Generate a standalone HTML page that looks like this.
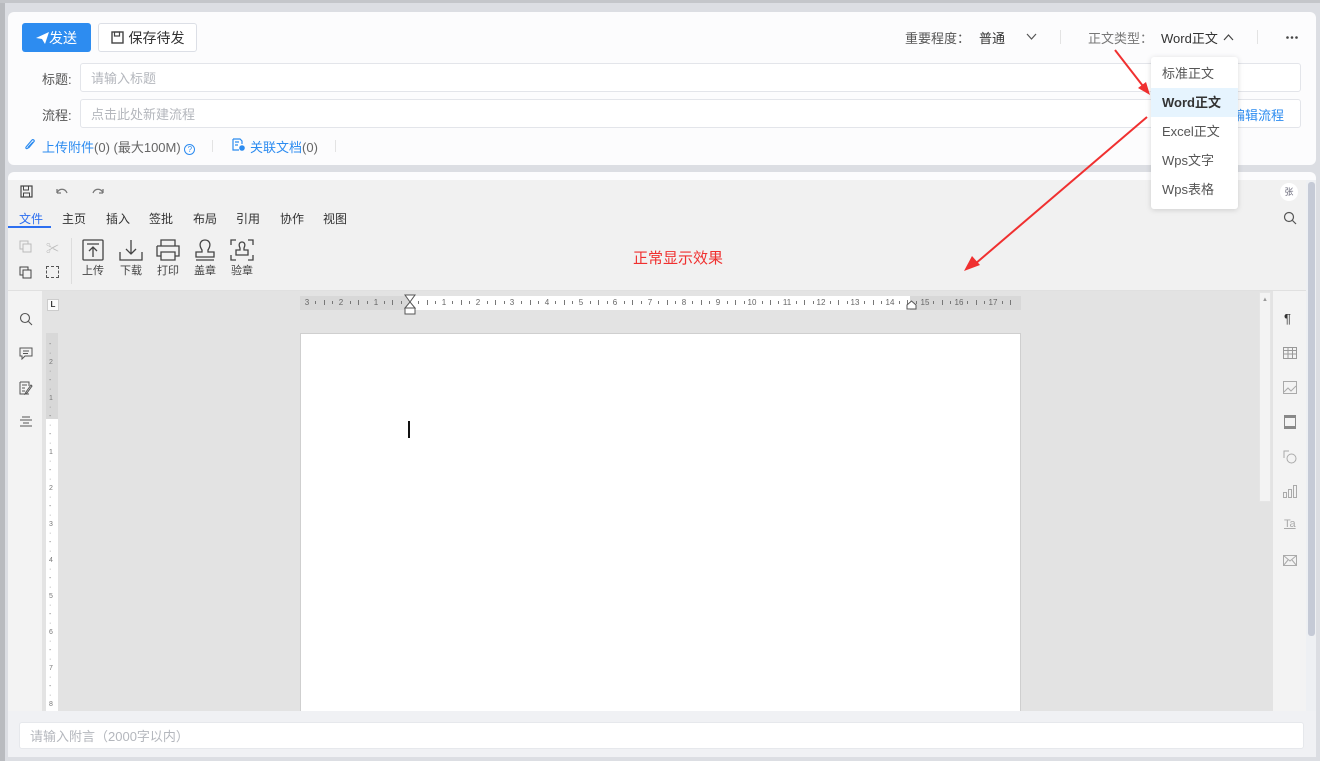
<!DOCTYPE html>
<html><head><meta charset="utf-8"><style>
*{box-sizing:border-box;margin:0;padding:0}
body{width:1320px;height:761px;background:#dcdee3;font-family:"Liberation Sans","Noto Sans CJK SC",sans-serif;font-size:13px;color:#333;position:relative;overflow:hidden}
.abs{position:absolute}
.card{position:absolute;background:#fcfcfd;border-radius:6px}
.btn{position:absolute;border-radius:3px;font-size:14px;display:flex;align-items:center;justify-content:center}
.inp{position:absolute;background:#fff;border:1px solid #e3e5ea;border-radius:3px;color:#b4b7bd;font-size:13px;padding-left:10px;display:flex;align-items:center}
.lbl{position:absolute;font-size:13px;color:#555}
.tab{position:absolute;top:210px;font-size:12px;color:#333}
.tb{position:absolute;font-size:11px;color:#444;text-align:center;width:30px}
.r{position:absolute;top:298px;font-size:8px;color:#666;width:12px;margin-left:-6px;text-align:center;line-height:9px}
.t{position:absolute;top:301px;width:1px;height:3px;background:#777}
.T{position:absolute;top:300px;width:1px;height:5px;background:#777}
.dd div{height:29px;line-height:29px;padding-left:11px;font-size:13px;color:#555}
</style></head><body>
<div class="abs" style="left:0;top:0;width:5px;height:761px;background:#b9bbbf"></div>
<div class="abs" style="left:0;top:0;width:1320px;height:3px;background:#c4c6ca"></div>
<div class="card" style="left:8px;top:12px;width:1308px;height:153px"></div>
<div class="btn" style="left:22px;top:23px;width:69px;height:29px;background:#2d8cf0;color:#fff"><svg width="13" height="12" viewBox="0 0 13 12"><path d="M0 6 L13 0 L9 12 L6 7 Z" fill="#fff"/></svg>发送</div>
<div class="btn" style="left:98px;top:23px;width:99px;height:29px;border:1px solid #dcdfe6;background:#fff;color:#333"><svg width="13" height="13" viewBox="0 0 13 13" style="margin-right:5px"><rect x="1" y="1" width="11" height="11" fill="none" stroke="#444" stroke-width="1.4"/><rect x="3.5" y="1" width="5" height="4" fill="none" stroke="#444" stroke-width="1.2"/></svg>保存待发</div>
<div class="lbl" style="left:905px;top:28px;color:#555">重要程度：</div>
<div class="lbl" style="left:979px;top:28px;color:#333">普通</div>
<svg class="abs" style="left:1026px;top:33px" width="11" height="8"><path d="M1 1 L5.5 6 L10 1" fill="none" stroke="#555" stroke-width="1.2"/></svg>
<div class="abs" style="left:1060px;top:30px;width:1px;height:14px;background:#e3e3e3"></div>
<div class="lbl" style="left:1088px;top:28px;color:#777">正文类型：</div>
<div class="lbl" style="left:1161px;top:28px;color:#333">Word正文</div>
<svg class="abs" style="left:1223px;top:33px" width="11" height="8"><path d="M1 7 L5.5 2 L10 7" fill="none" stroke="#444" stroke-width="1.2"/></svg>
<div class="abs" style="left:1257px;top:30px;width:1px;height:14px;background:#e3e3e3"></div>
<svg class="abs" style="left:1286px;top:36px" width="12" height="3"><circle cx="1.5" cy="1.5" r="1.3" fill="#444"/><circle cx="6" cy="1.5" r="1.3" fill="#444"/><circle cx="10.5" cy="1.5" r="1.3" fill="#444"/></svg>
<div class="lbl" style="left:42px;top:69px">标题:</div>
<div class="inp" style="left:80px;top:63px;width:1221px;height:29px">请输入标题</div>
<div class="lbl" style="left:42px;top:105px">流程:</div>
<div class="inp" style="left:80px;top:99px;width:1221px;height:29px">点击此处新建流程</div>
<div class="abs" style="left:1232px;top:105px;font-size:13px;color:#2d8cf0">编辑流程</div>
<svg class="abs" style="left:24px;top:138px" width="12" height="13"><path d="M9 4L4 10C2.5 11.5 1 10 2.5 8.5L8 2C9 1 11 2.5 10 3.5L5 9.5C4.5 10 3.8 9.5 4.3 9L8 5" fill="none" stroke="#2d8cf0" stroke-width="1.2"/></svg>
<div class="abs" style="left:42px;top:137px;font-size:13px;color:#2d8cf0">上传附件<span style="color:#666">(0) (最大100M)</span> <span style="display:inline-block;width:11px;height:11px;border:1px solid #2d8cf0;border-radius:50%;font-size:8px;text-align:center;line-height:10px">?</span></div>
<div class="abs" style="left:212px;top:140px;width:1px;height:12px;background:#e3e3e3"></div>
<svg class="abs" style="left:232px;top:138px" width="13" height="13"><path d="M1 1H8L10 3V6M1 1V12H7M3 4H7M3 7H6" fill="none" stroke="#2d8cf0" stroke-width="1.2"/><circle cx="10" cy="10" r="2.8" fill="#2d8cf0"/></svg>
<div class="abs" style="left:250px;top:137px;font-size:13px;color:#2d8cf0">关联文档<span style="color:#666">(0)</span></div>
<div class="abs" style="left:335px;top:140px;width:1px;height:12px;background:#e3e3e3"></div>
<div class="card" style="left:8px;top:172px;width:1308px;height:585px;background:#fcfcfd"></div>
<div class="abs" style="left:8px;top:180px;width:1298px;height:110px;background:#f1f1f1"></div>
<div class="abs" style="left:8px;top:290px;width:1298px;height:1px;background:#e0e0e0"></div>
<svg class="abs" style="left:20px;top:185px" width="13" height="13"><rect x="1" y="1" width="11" height="11" fill="none" stroke="#444" stroke-width="1.2"/><rect x="3.5" y="1" width="5" height="4" fill="none" stroke="#444"/><rect x="3.5" y="8" width="6" height="4" fill="none" stroke="#444"/></svg>
<svg class="abs" style="left:55px;top:187px" width="14" height="8"><path d="M2 6C4 1 10 1 12 6M2 6V2M2 6H6" fill="none" stroke="#777" stroke-width="1.3"/></svg>
<svg class="abs" style="left:91px;top:187px" width="14" height="8"><path d="M12 6C10 1 4 1 2 6M12 6V2M12 6H8" fill="none" stroke="#777" stroke-width="1.3"/></svg>
<div class="tab" style="left:19px;color:#2d6ff0">文件</div>
<div class="abs" style="left:8px;top:226px;width:43px;height:2px;background:#2d6ff0"></div>
<div class="tab" style="left:62px">主页</div>
<div class="tab" style="left:106px">插入</div>
<div class="tab" style="left:149px">签批</div>
<div class="tab" style="left:193px">布局</div>
<div class="tab" style="left:236px">引用</div>
<div class="tab" style="left:280px">协作</div>
<div class="tab" style="left:323px">视图</div>
<svg class="abs" style="left:19px;top:240px" width="13" height="13"><rect x="1" y="1" width="8" height="8" fill="none" stroke="#bbb"/><rect x="4" y="4" width="8" height="8" fill="#f1f1f1" stroke="#bbb"/></svg>
<div class="abs" style="left:46px;top:238px;color:#bbb;font-size:13px">✂</div>
<svg class="abs" style="left:19px;top:266px" width="13" height="13"><rect x="1" y="1" width="8" height="8" fill="none" stroke="#444"/><rect x="4" y="4" width="8" height="8" fill="#f1f1f1" stroke="#444"/></svg>
<div class="abs" style="left:46px;top:266px;width:13px;height:12px;border:1px dashed #555"></div>
<div class="abs" style="left:71px;top:238px;width:1px;height:46px;background:#ddd"></div>
<svg class="abs" style="left:82px;top:239px" width="22" height="22"><rect x="1" y="1" width="20" height="20" rx="1" fill="none" stroke="#444" stroke-width="1.3"/><path d="M5 5H17M11 8V18M7 12L11 8L15 12" fill="none" stroke="#444" stroke-width="1.3"/></svg>
<svg class="abs" style="left:119px;top:239px" width="24" height="22"><path d="M12 1V15M7 10L12 15L17 10M1 13V21H23V13" fill="none" stroke="#444" stroke-width="1.3"/></svg>
<svg class="abs" style="left:156px;top:239px" width="24" height="22"><path d="M5 7V1H19V7M1 7H23V17H19M5 17H1V7M5 13H19V21H5Z" fill="none" stroke="#444" stroke-width="1.3"/></svg>
<svg class="abs" style="left:194px;top:239px" width="22" height="22"><path d="M8 11C4 5 7 1 11 1S18 5 14 11V13H20V18H2V13H8Z M2 21H20" fill="none" stroke="#444" stroke-width="1.3"/></svg>
<svg class="abs" style="left:230px;top:239px" width="24" height="22"><path d="M1 6V1H6M18 1H23V6M1 16V21H6M18 21H23V16M10 9C8 5 10 3 12 3S16 5 14 9V11H18V16H6V11H10Z" fill="none" stroke="#444" stroke-width="1.3"/></svg>
<div class="tb" style="left:78px;top:262px">上传</div>
<div class="tb" style="left:116px;top:262px">下载</div>
<div class="tb" style="left:153px;top:262px">打印</div>
<div class="tb" style="left:190px;top:262px">盖章</div>
<div class="tb" style="left:227px;top:262px">验章</div>
<div class="abs" style="left:633px;top:247px;font-size:15px;color:#f0302f">正常显示效果</div>
<div class="abs" style="left:1280px;top:183px;width:18px;height:18px;border-radius:50%;background:#fff;font-size:9px;color:#667;text-align:center;line-height:18px">张</div>
<svg class="abs" style="left:1283px;top:211px" width="14" height="14"><circle cx="6" cy="6" r="4.5" fill="none" stroke="#555" stroke-width="1.2"/><path d="M9.5 9.5L13 13" stroke="#555" stroke-width="1.2"/></svg>
<div class="abs" style="left:8px;top:291px;width:35px;height:420px;background:#f3f3f3;border-right:1px solid #e3e3e3"></div>
<div class="abs" style="left:43px;top:291px;width:1229px;height:420px;background:#e3e3e3"></div>
<div class="abs" style="left:1272px;top:291px;width:34px;height:420px;background:#f3f3f3;border-left:1px solid #e3e3e3"></div>
<div class="abs" style="left:1306px;top:180px;width:10px;height:531px;background:#eef0f3"></div>
<div class="abs" style="left:1308px;top:182px;width:7px;height:454px;background:#c5cad6;border-radius:3px"></div>
<svg class="abs" style="left:19px;top:312px" width="14" height="14"><circle cx="6" cy="6" r="4.5" fill="none" stroke="#555" stroke-width="1.1"/><path d="M9.5 9.5L13 13" stroke="#555" stroke-width="1.1"/></svg>
<svg class="abs" style="left:19px;top:347px" width="14" height="13"><path d="M1 1H13V9H6L3 12V9H1Z M4 4H10M4 6.5H9" fill="none" stroke="#555" stroke-width="1"/></svg>
<svg class="abs" style="left:19px;top:381px" width="14" height="14"><path d="M1 1H10V5M1 1V13H10M3 4H8M3 7H6M3 10H6M12 4L7 11L6 13L8 12L13 5Z" fill="none" stroke="#555" stroke-width="1"/></svg>
<svg class="abs" style="left:19px;top:416px" width="14" height="12"><path d="M3 1H11M1 4H13M4 7H10M1 10H13" stroke="#555" stroke-width="1"/></svg>
<div class="abs" style="left:47px;top:299px;width:12px;height:12px;background:#fafafa;border:1px solid #ccc;font-size:8px;font-weight:bold;text-align:center;line-height:10px">L</div>
<div class="abs" style="left:300px;top:296px;width:721px;height:14px;background:#d8d8d8"></div>
<div class="abs" style="left:410px;top:296px;width:500px;height:14px;background:#fff"></div>
<div class="r" style="left:307px">3</div><div class="r" style="left:341px">2</div><div class="r" style="left:376px">1</div>
<div class="r" style="left:444px">1</div><div class="r" style="left:478px">2</div><div class="r" style="left:512px">3</div><div class="r" style="left:547px">4</div><div class="r" style="left:581px">5</div><div class="r" style="left:615px">6</div><div class="r" style="left:650px">7</div><div class="r" style="left:684px">8</div><div class="r" style="left:718px">9</div><div class="r" style="left:752px">10</div><div class="r" style="left:787px">11</div><div class="r" style="left:821px">12</div><div class="r" style="left:855px">13</div><div class="r" style="left:890px">14</div><div class="r" style="left:925px">15</div><div class="r" style="left:959px">16</div><div class="r" style="left:993px">17</div>
<div class="t" style="left:315px"></div><div class="T" style="left:324px"></div><div class="t" style="left:332px"></div><div class="t" style="left:350px"></div><div class="T" style="left:358px"></div><div class="t" style="left:367px"></div><div class="t" style="left:384px"></div><div class="T" style="left:392px"></div><div class="t" style="left:401px"></div>
<div class="t" style="left:418px"></div><div class="T" style="left:427px"></div><div class="t" style="left:435px"></div><div class="t" style="left:452px"></div><div class="T" style="left:461px"></div><div class="t" style="left:469px"></div><div class="t" style="left:487px"></div><div class="T" style="left:495px"></div><div class="t" style="left:504px"></div><div class="t" style="left:521px"></div><div class="T" style="left:530px"></div><div class="t" style="left:538px"></div><div class="t" style="left:555px"></div><div class="T" style="left:564px"></div><div class="t" style="left:572px"></div><div class="t" style="left:590px"></div><div class="T" style="left:598px"></div><div class="t" style="left:607px"></div><div class="t" style="left:624px"></div><div class="T" style="left:632px"></div><div class="t" style="left:641px"></div><div class="t" style="left:658px"></div><div class="T" style="left:667px"></div><div class="t" style="left:675px"></div><div class="t" style="left:692px"></div><div class="T" style="left:701px"></div><div class="t" style="left:709px"></div><div class="t" style="left:727px"></div><div class="T" style="left:735px"></div><div class="t" style="left:744px"></div><div class="t" style="left:762px"></div><div class="T" style="left:770px"></div><div class="t" style="left:778px"></div><div class="t" style="left:796px"></div><div class="T" style="left:804px"></div><div class="t" style="left:813px"></div><div class="t" style="left:830px"></div><div class="T" style="left:838px"></div><div class="t" style="left:847px"></div><div class="t" style="left:864px"></div><div class="T" style="left:873px"></div><div class="t" style="left:881px"></div><div class="t" style="left:899px"></div><div class="T" style="left:907px"></div><div class="t" style="left:916px"></div><div class="t" style="left:933px"></div><div class="T" style="left:942px"></div><div class="t" style="left:950px"></div><div class="t" style="left:967px"></div><div class="T" style="left:976px"></div><div class="t" style="left:984px"></div><div class="t" style="left:1002px"></div><div class="T" style="left:1010px"></div>
<svg class="abs" style="left:404px;top:294px" width="12" height="21"><path d="M1 1H11L6 8L11 14H1L6 8Z M1 14H11V20H1Z" fill="#fff" stroke="#555" stroke-width="1"/></svg>
<svg class="abs" style="left:906px;top:300px" width="11" height="10"><path d="M1 9V5L5.5 1L10 5V9Z" fill="#fff" stroke="#555"/></svg>
<div class="abs" style="left:46px;top:333px;width:12px;height:378px;background:#fff"></div>
<div class="abs" style="left:46px;top:333px;width:12px;height:86px;background:#d8d8d8"></div>
<div class="abs" style="left:49px;top:340px;width:6px;height:370px;font-size:7px;color:#777;line-height:9px;word-break:break-all">- · 2 · - · 1 · - · - · 1 · - · 2 · - · 3 · - · 4 · - · 5 · - · 6 · - · 7 · - · 8 ·</div>
<div class="abs" style="left:300px;top:333px;width:721px;height:378px;background:#fff;border:1px solid #cfcfcf;border-bottom:none"></div>
<div class="abs" style="left:408px;top:421px;width:2px;height:17px;background:#111"></div>
<div class="abs" style="left:1259px;top:292px;width:12px;height:210px;background:#f3f3f3;border:1px solid #e5e5e5"></div>
<div class="abs" style="left:1262px;top:297px;font-size:6px;color:#999">▲</div>
<div class="abs" style="left:1284px;top:311px;font-size:13px;color:#333">¶</div>
<svg class="abs" style="left:1283px;top:347px" width="14" height="12"><rect x="0.5" y="0.5" width="13" height="11" fill="none" stroke="#999"/><path d="M0 3.5H14M0 7H14M5 0V12M9.5 0V12" stroke="#999"/></svg>
<svg class="abs" style="left:1283px;top:381px" width="14" height="13"><rect x="0.5" y="0.5" width="13" height="12" fill="none" stroke="#aaa"/><path d="M1 11L5 7L8 10L13 5" fill="none" stroke="#aaa"/></svg>
<svg class="abs" style="left:1284px;top:415px" width="12" height="14"><rect x="0.5" y="0.5" width="11" height="13" fill="none" stroke="#888"/><rect x="1" y="1" width="10" height="2" fill="#888"/><rect x="1" y="11" width="10" height="2" fill="#888"/></svg>
<svg class="abs" style="left:1283px;top:450px" width="14" height="14"><path d="M6 1H1V8" fill="none" stroke="#aaa"/><circle cx="8.5" cy="8.5" r="4.5" fill="none" stroke="#aaa"/></svg>
<svg class="abs" style="left:1283px;top:485px" width="14" height="13"><rect x="0.5" y="7.5" width="3" height="5" fill="none" stroke="#aaa"/><rect x="5.5" y="4.5" width="3" height="8" fill="none" stroke="#aaa"/><rect x="10.5" y="0.5" width="3" height="12" fill="none" stroke="#aaa"/></svg>
<div class="abs" style="left:1284px;top:518px;font-size:11px;color:#aaa;text-decoration:underline">Ta</div>
<svg class="abs" style="left:1283px;top:555px" width="14" height="11"><rect x="0.5" y="0.5" width="13" height="10" fill="none" stroke="#aaa"/><path d="M0.5 0.5L7 6L13.5 0.5M0.5 10.5L5 5M13.5 10.5L9 5" fill="none" stroke="#aaa"/></svg>
<div class="abs" style="left:8px;top:711px;width:1308px;height:46px;background:#f0f1f4"></div>
<div class="inp" style="left:19px;top:722px;width:1285px;height:27px;border-color:#e6e8ec;color:#b4b7bd">请输入附言（2000字以内）</div>
<svg class="abs" style="left:0;top:0" width="1320" height="761">
<line x1="1115" y1="50" x2="1146" y2="90" stroke="#f03030" stroke-width="2"/>
<path d="M1150 95 L1138 88 L1146 82 Z" fill="#f03030"/>
<line x1="1147" y1="117" x2="975" y2="264" stroke="#f03030" stroke-width="2"/>
<path d="M964 271 L972 256 L980 265 Z" fill="#f03030"/>
</svg>
<div class="abs dd" style="left:1151px;top:57px;width:87px;height:152px;background:#fff;border-radius:3px;box-shadow:0 1px 6px rgba(0,0,0,.15);padding-top:2px">
<div>标准正文</div>
<div style="background:#e6f4fe;font-weight:bold;color:#333">Word正文</div>
<div>Excel正文</div>
<div>Wps文字</div>
<div>Wps表格</div>
</div>
</body></html>
